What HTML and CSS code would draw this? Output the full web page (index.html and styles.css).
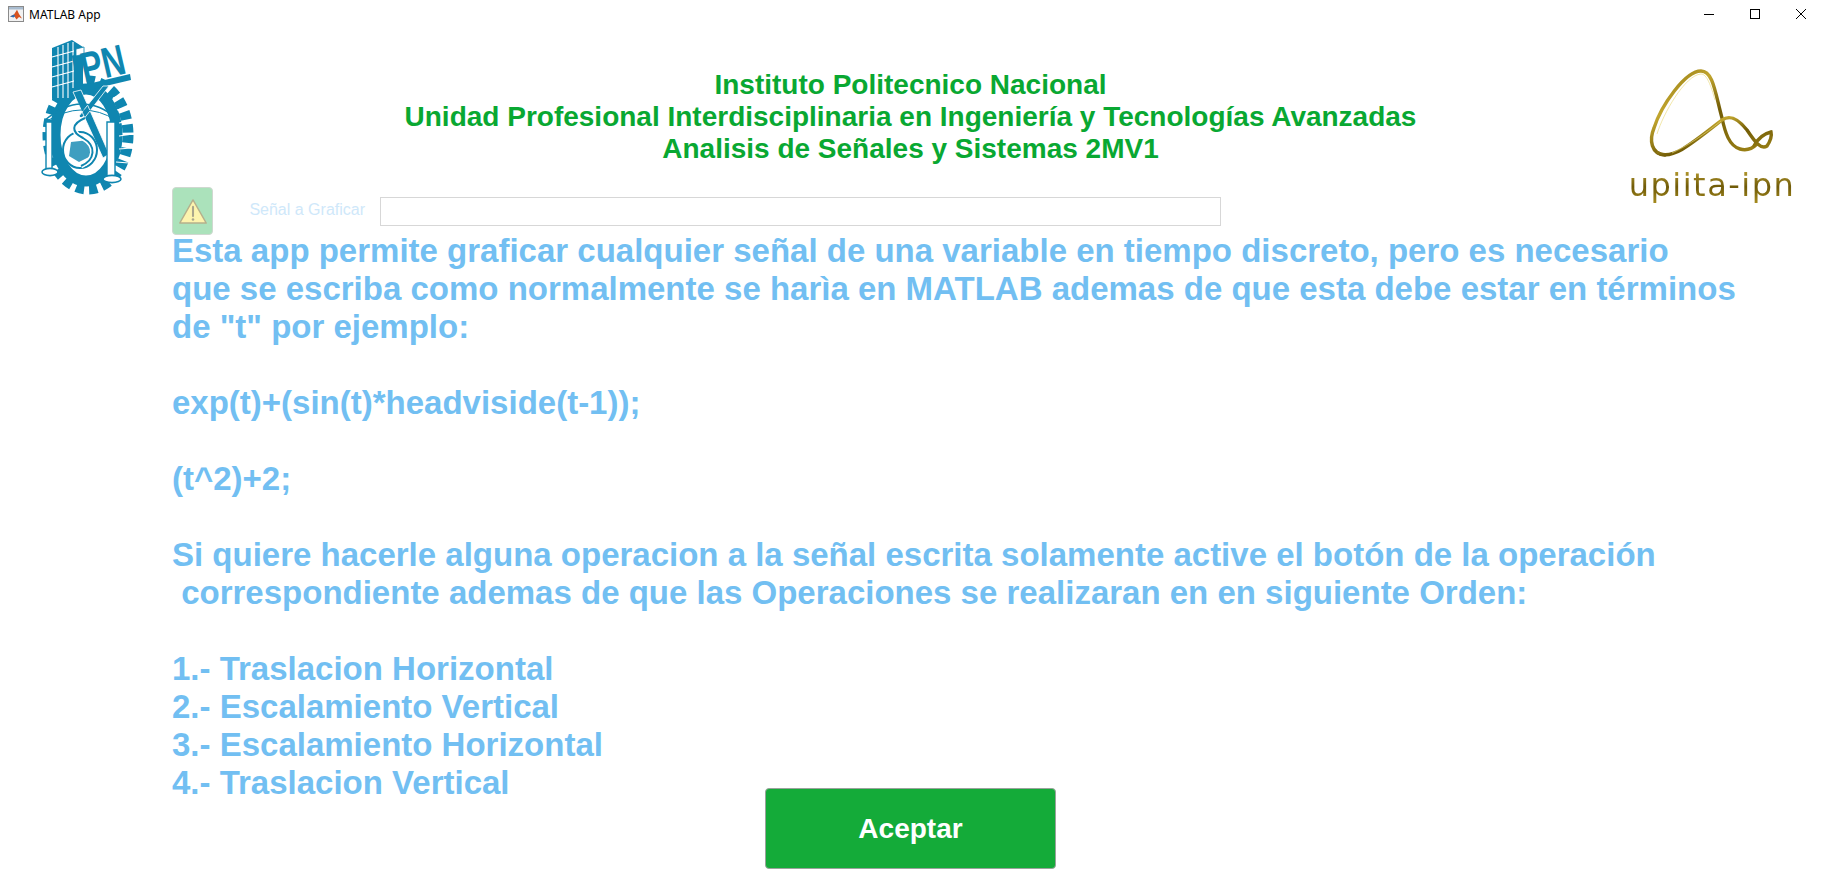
FILE: index.html
```html
<!DOCTYPE html>
<html lang="es">
<head>
<meta charset="utf-8">
<title>MATLAB App</title>
<link rel="stylesheet" href="styles.css">
</head>
<body>
<header class="titlebar">
  <div class="app-name">
    <svg class="app-icon" viewBox="0 0 16 16">
      <rect x="0.5" y="0.5" width="15" height="15" fill="#f2f2f2" stroke="#8a8a8a"/>
      <rect x="1" y="1" width="14" height="2.5" fill="#a9bcd0"/>
      <path d="M2 10.5 L6 8.5 L9 3.8 L11 8 L14 12.5 L11 11 L8.5 13.5 L6.5 10.5 Z" fill="#d9531e"/>
      <path d="M2 10.5 L6 8.5 L7.2 10 L5.6 11.6 Z" fill="#2f6fb3"/>
    </svg>
    <span>MATLAB App</span>
  </div>
  <div class="win-controls">
    <svg viewBox="0 0 10 10"><path d="M0 5.5H10"/></svg>
    <svg viewBox="0 0 10 10"><rect x="0.5" y="0.5" width="9" height="9"/></svg>
    <svg viewBox="0 0 10 10"><path d="M0 0L10 10M10 0L0 10"/></svg>
  </div>
</header>

<main class="app">
  <section class="banner">
    <svg class="logo-ipn" viewBox="0 0 90 156">
      <g fill="none" stroke="#0f86b0">
        <ellipse cx="45" cy="97" rx="40" ry="54" stroke-width="11" stroke-dasharray="8 5"/>
        <ellipse cx="43" cy="97" rx="31" ry="46" stroke-width="11"/>
      </g>
      <path d="M70 60L86 54M74 72L90 68M76 85L90 82M76 98L90 96M76 111L88 110M73 124L86 125" stroke="#fff" stroke-width="1.2" fill="none"/>
      <path d="M0 40H9V62H0Z" fill="#fff"/>
      <path d="M9 10 L29 2 L40 9 L40 50 L32 52 L32 60 L9 60 Z" fill="#0f86b0"/>
      <path d="M15 9V60M20 7V60M25 5V60M30 4V50M9 19L31 13M9 29L31 23M9 39L31 33M9 49L31 43" stroke="#fff" stroke-width="1.1" fill="none"/>
      <path d="M33 11L41 9V16L33 18Z" fill="#fff" stroke="#0f86b0" stroke-width="0.8"/>
      <text class="ipn-text" x="33" y="47" transform="rotate(-13 33 47)" textLength="53" lengthAdjust="spacingAndGlyphs">IPN</text>
      <path d="M32 49 L87 36 L88 42 L33 55 Z" fill="#0f86b0"/>
      <path d="M30 54 L60 120 L66 116 L38 52 Z M60 48 L36 78 L40 82 L66 48 Z" fill="#0f86b0" stroke="#fff" stroke-width="0.8"/>
      <path d="M2 82 Q22 66 38 66 Q58 66 72 80" fill="none" stroke="#0f86b0" stroke-width="1.5"/>
      <path d="M2 84 Q22 72 38 72 Q58 72 72 82" fill="none" stroke="#0f86b0" stroke-width="1"/>
      <path d="M3 84H9V132H3ZM64 84H72V138H64Z" fill="#fff" stroke="#0f86b0" stroke-width="1.4"/>
      <ellipse cx="7" cy="134" rx="8" ry="3.6" fill="#fff" stroke="#0f86b0" stroke-width="1.6"/>
      <ellipse cx="69" cy="141" rx="9" ry="3.6" fill="#fff" stroke="#0f86b0" stroke-width="1.6"/>
      <ellipse cx="37" cy="112" rx="17" ry="18" fill="#fff" stroke="#0f86b0" stroke-width="2"/>
      <path d="M28 104L46 102L48 118L36 124L26 118Z" fill="#0f86b0" opacity="0.8"/>
      <path d="M42 80 C28 86 28 94 40 100 C54 108 52 122 38 128" fill="none" stroke="#fff" stroke-width="5"/>
      <path d="M42 80 C28 86 28 94 40 100 C54 108 52 122 38 128" fill="none" stroke="#0f86b0" stroke-width="2"/>
    </svg>

    <h1 class="heading">
      <span>Instituto Politecnico Nacional</span>
      <span>Unidad Profesional Interdisciplinaria en Ingeniería y Tecnologías Avanzadas</span>
      <span>Analisis de Señales y Sistemas 2MV1</span>
    </h1>

    <div class="logo-upiita">
      <svg viewBox="0 0 170 94">
        <defs>
          <linearGradient id="gold" x1="0" y1="0" x2="1" y2="1">
            <stop offset="0" stop-color="#806808"/>
            <stop offset="0.3" stop-color="#c2a62e"/>
            <stop offset="0.55" stop-color="#725c06"/>
            <stop offset="1" stop-color="#a08618"/>
          </linearGradient>
        </defs>
        <path class="gold-main" d="M38 87 C24 86 22 72 27 60 C34 38 58 3 74 3 C86 3 88 24 95 50 C98 64 102 78 113 81 C120 83 126 80 130 76"/>
        <path class="gold-main" d="M31 85 C45 92 62 78 95 52 C104 46 112 52 120 62 C128 74 134 82 140 78 C144 72 145 68 144 64 C136 66 130 72 127 78"/>
        <path class="gold-light" d="M30 66 C36 46 58 7 74 6 C80 6 84 18 88 32"/>
        <path class="gold-light" d="M45 85 C60 78 78 66 94 53"/>
      </svg>
      <span class="upiita-text">upiita-ipn</span>
    </div>
  </section>

  <section class="form-row">
    <button class="warn-btn" type="button" aria-label="Aviso">
      <svg viewBox="0 0 26 24">
        <path d="M13 2 L24.5 22 H1.5 Z" fill="#fdf4ae" stroke="#b5b08c" stroke-width="1.2" stroke-linejoin="round"/>
        <path d="M13 8V16" stroke="#aaa68c" stroke-width="1.8" stroke-linecap="round"/>
        <circle cx="13" cy="19" r="1.1" fill="#aaa68c"/>
      </svg>
    </button>
    <label class="field-label" for="signal">Señal a Graficar</label>
    <input id="signal" class="field-input" type="text">
  </section>

  <section class="help">
<p>Esta app permite graficar cualquier señal de una variable en tiempo discreto, pero es necesario</p>
<p>que se escriba como normalmente se harìa en MATLAB ademas de que esta debe estar en términos</p>
<p>de "t" por ejemplo:</p>
<p>&nbsp;</p>
<p>exp(t)+(sin(t)*headviside(t-1));</p>
<p>&nbsp;</p>
<p>(t^2)+2;</p>
<p>&nbsp;</p>
<p>Si quiere hacerle alguna operacion a la señal escrita solamente active el botón de la operación</p>
<p> correspondiente ademas de que las Operaciones se realizaran en en siguiente Orden:</p>
<p>&nbsp;</p>
<p>1.- Traslacion Horizontal</p>
<p>2.- Escalamiento Vertical</p>
<p>3.- Escalamiento Horizontal</p>
<p>4.- Traslacion Vertical</p>
  </section>

  <button class="accept" type="button">Aceptar</button>
</main>
</body>
</html>
```

FILE: styles.css
```css
* { box-sizing: border-box; }
html, body { margin: 0; height: 100%; overflow: hidden; background: #fff; }
body { font-family: "Liberation Sans", Arial, sans-serif; display: flex; flex-direction: column; }

.titlebar { height: 30px; flex: none; display: flex; justify-content: space-between; align-items: center; padding-left: 8px; }
.app-name { display: flex; align-items: center; gap: 5px; font: 12px "Noto Sans", "Open Sans", sans-serif; color: #000; margin-top: -2px; }
.app-icon { width: 16px; height: 16px; }
.win-controls { display: flex; gap: 36px; padding-right: 15px; margin-top: -2px; }
.win-controls svg { width: 10px; height: 10px; fill: none; stroke: #000; stroke-width: 1; display: block; }

.app { flex: 1; display: flex; flex-direction: column; min-height: 0; }

.banner { height: 157px; flex: none; display: grid; grid-template-columns: 200px 1fr 200px; }
.logo-ipn { width: 90px; height: 156px; margin: 8px 0 0 43px; overflow: visible; }
.ipn-text { font: 700 43px "Liberation Sans", sans-serif; fill: #0f86b0; }
.gold-main { fill: none; stroke: url(#gold); stroke-width: 3.4; stroke-linecap: round; }
.gold-light { fill: none; stroke: #e9d878; stroke-width: 0.9; opacity: 0.7; }
.heading { margin: 39px 0 0; font-size: 28px; font-weight: 700; line-height: 32px; color: #09a832; text-align: center; display: flex; flex-direction: column; }
.logo-upiita { width: 170px; height: 135px; margin: 38px 0 0 6px; display: flex; flex-direction: column; align-items: center; }
.logo-upiita svg { width: 170px; height: 94px; flex: none; }
.upiita-text { margin-top: 4px; font: 400 32px/38px "DejaVu Sans", sans-serif; letter-spacing: 1.5px; background: linear-gradient(180deg, #c9ad3a, #6f5a08 55%, #a98e20); -webkit-background-clip: text; background-clip: text; color: transparent; white-space: nowrap; }

.form-row { height: 48px; flex: none; display: flex; align-items: center; padding-left: 172px; }
.warn-btn { width: 41px; height: 48px; padding: 0; background: #abe2bb; border: 1px solid #cfd8d0; border-radius: 4px; display: flex; align-items: center; justify-content: center; }
.warn-btn svg { width: 30px; height: 29px; }
.field-label { width: 167px; padding-right: 15px; margin-top: -2px; text-align: right; font-size: 16px; color: #cfe8fa; }
.field-input { width: 841px; height: 29px; border: 1px solid #d7d7d7; background: #fff; padding: 0; }

.help { margin-top: -3px; padding-left: 172px; font-size: 33px; font-weight: 700; line-height: 38px; color: #72bff2; }
.help p { margin: 0; white-space: pre; }

.accept { align-self: flex-start; width: 291px; height: 81px; margin: -14px 0 0 765px; background: #14ab39; border: 1px solid #9aa39c; border-radius: 4px; color: #fff; font: 700 28px "Liberation Sans", sans-serif; }
```
